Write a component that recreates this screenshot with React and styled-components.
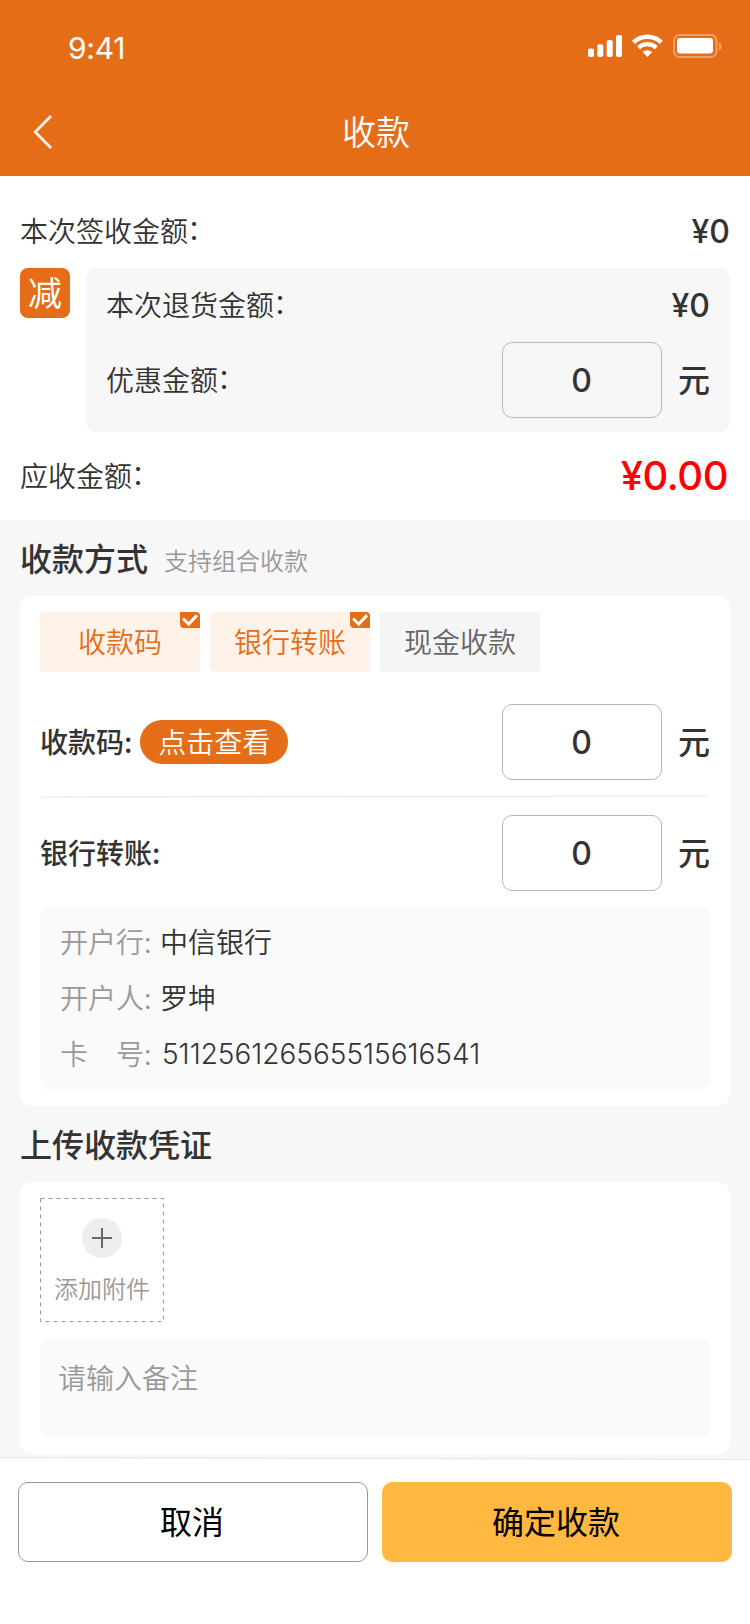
import React, { useState } from 'react';
import styled, { createGlobalStyle } from 'styled-components';

const GlobalStyle = createGlobalStyle`
  * {
    box-sizing: border-box;
  }

  body {
    margin: 0;
    background-color: #f7f7f7;
    color: #333;
    font-family: 'Noto Sans CJK SC', sans-serif;
    font-size: 28px;
  }

  button,
  input,
  textarea {
    margin: 0;
    padding: 0;
    border: 0;
    outline: 0;
    color: inherit;
    font-family: inherit;
  }
`;

const Page = styled.div`
  display: flex;
  flex-direction: column;
  width: 750px;
  height: 1624px;
  overflow: hidden;
`;

const Header = styled.header`
  flex-shrink: 0;
  height: 176px;
  background-color: #e66d17;
  color: #fff;
`;

const StatusBar = styled.div`
  display: flex;
  justify-content: space-between;
  height: 88px;
  padding: 0 28px 0 68px;
`;

const Clock = styled.span`
  padding-top: 30px;
  font-family: Inter, sans-serif;
  font-size: 30px;
  font-weight: 380;
  line-height: 36px;
  letter-spacing: -0.3px;
`;

const NavBar = styled.div`
  display: grid;
  grid-template-columns: 100px 1fr 98px;
  align-items: center;
  height: 88px;
`;

const Back = styled.button`
  display: flex;
  padding-left: 33px;
  background: none;
`;

const NavTitle = styled.h1`
  margin: 0;
  padding-bottom: 2px;
  font-size: 34px;
  font-weight: 350;
  line-height: 50px;
  text-align: center;
`;

const Summary = styled.section`
  flex-shrink: 0;
  height: 344px;
  padding: 18px 20px 0;
  background-color: #fff;
`;

const Row = styled.div`
  display: flex;
  align-items: center;
  justify-content: space-between;
  height: ${props => props.$height || 76}px;
`;

const Label = styled.span`
  padding-bottom: 2px;
  font-weight: ${props => (props.$strong ? 500 : 350)};
  line-height: 40px;
`;

const Colon = styled.span`
  margin-left: -1px;
  line-height: 1;
  vertical-align: 2px;
`;

const Amount = styled.span`
  padding-top: 2px;
  font-family: Inter, 'Noto Sans CJK SC', sans-serif;
  font-size: 32px;
  font-weight: 500;
  line-height: 38px;
`;

const Total = styled(Amount)`
  padding: 0 2px 1px 0;
  color: #ff0000;
  font-size: 40px;
  line-height: 48px;
  letter-spacing: -0.5px;
`;

const Deduction = styled.div`
  display: flex;
  align-items: flex-start;
  gap: 16px;
`;

const Minus = styled.span`
  width: 50px;
  height: 50px;
  border-radius: 8px;
  background-color: #e66d17;
  color: #fff;
  font-size: 34px;
  line-height: 47px;
  text-align: center;
`;

const DeductionPanel = styled.div`
  flex: 1;
  height: 164px;
  padding: 0 20px;
  border-radius: 10px;
  background-color: #f7f7f7;
`;

const MoneyField = styled.label`
  display: flex;
  align-items: center;
  gap: 16px;
  font-size: 32px;
  line-height: 46px;
`;

const Unit = styled.span`
  padding-bottom: 4px;
  font-weight: 500;
`;

const MoneyInput = styled.input`
  width: 160px;
  height: 76px;
  padding: 1px 1px 0 0;
  border: 1px solid #b8b8b8;
  border-radius: 10px;
  background: none;
  font-family: Inter, sans-serif;
  font-size: 32px;
  font-weight: 500;
  text-align: center;
`;

const SectionTitle = styled.h2`
  display: flex;
  align-items: center;
  flex-shrink: 0;
  gap: 16px;
  height: 76px;
  margin: 0;
  padding: 0 20px 3px;
  font-size: 32px;
  font-weight: 500;
  line-height: 46px;

  small {
    padding-top: 6px;
    color: #999;
    font-size: 24px;
    font-weight: 350;
    line-height: 36px;
  }
`;

const Card = styled.section`
  flex-shrink: 0;
  margin: 0 20px;
  padding: 16px 20px;
  border-radius: 12px;
  background-color: #fff;
`;

const Methods = styled.div`
  display: flex;
  gap: 10px;
  margin-bottom: 32px;
`;

const Method = styled.button`
  position: relative;
  width: 160px;
  height: 60px;
  padding-bottom: 2px;
  border-radius: 4px;
  background-color: ${props => (props.$active ? '#fff2e9' : '#f5f5f5')};
  color: ${props => (props.$active ? '#e66d17' : '#666')};
  font-size: 28px;
  font-weight: 350;
  line-height: 58px;

  svg {
    position: absolute;
    top: 0;
    right: 0;
  }
`;

const LabelGroup = styled.div`
  display: flex;
  align-items: center;
  gap: 8px;
`;

const ViewButton = styled.button`
  width: 148px;
  height: 44px;
  padding-bottom: 2px;
  border-radius: 22px;
  background-color: #e66d17;
  color: #fff;
  font-size: 28px;
  font-weight: 350;
  line-height: 42px;
`;

const Divider = styled.svg`
  display: block;
  margin: 15px 0 17px 1px;
`;

const BankInfo = styled.dl`
  display: grid;
  grid-template-columns: 100px 1fr;
  grid-auto-rows: 56px;
  align-items: center;
  height: 184px;
  margin: 15px 0 0;
  padding: 7px 20px;
  border-radius: 10px;
  background-color: #fafafa;
  line-height: 40px;
`;

const BankTerm = styled.dt`
  color: #999;
  font-weight: 350;
`;

const BankValue = styled.dd`
  margin: 0;
  font-weight: 350;
`;

const CardNumber = styled(BankValue)`
  padding: 2px 0 0 2px;
  font-family: Inter, sans-serif;
`;

const Upload = styled.button`
  position: relative;
  display: flex;
  flex-direction: column;
  align-items: center;
  width: 124px;
  height: 124px;
  padding-top: 20px;
  background: none;
  color: #999;
  font-size: 24px;
  font-weight: 350;
  line-height: 36px;
`;

const UploadOutline = styled.svg`
  position: absolute;
  inset: 0;
`;

const UploadIcon = styled.svg`
  margin-bottom: 12px;
`;

const Remark = styled.textarea`
  display: block;
  width: 100%;
  height: 100px;
  margin-top: 16px;
  padding: 19px 18px;
  border-radius: 10px;
  background-color: #fafafa;
  font-size: 28px;
  font-weight: 350;
  line-height: 40px;
  resize: none;

  &::placeholder {
    color: #999;
  }
`;

const Footer = styled.footer`
  flex: 1;
  margin-top: 2px;
`;

const FooterEdge = styled.svg`
  display: block;
`;

const Actions = styled.div`
  display: flex;
  gap: 14px;
  height: 164px;
  padding: 22px 18px 0;
  background-color: #fff;
`;

const ActionButton = styled.button`
  width: 350px;
  height: 80px;
  padding: 0 2px 3px 0;
  border: ${props => (props.$primary ? '0' : '1px solid #999')};
  border-radius: 10px;
  background-color: ${props => (props.$primary ? '#ffb940' : '#fff')};
  color: #000;
  font-size: 32px;
  line-height: 75px;
`;

const StatusIconsWrap = styled.svg`
  margin-top: 34px;
`;

const StatusIcons = () => (
  <StatusIconsWrap width='134' height='24' viewBox='0 0 134 24' fill='#fff'>
    <rect x='0' y='14.5' width='6' height='8.5' rx='2' />
    <rect x='9.3' y='10.3' width='6' height='12.7' rx='2' />
    <rect x='18.7' y='6' width='6' height='17' rx='2' />
    <rect x='28' y='1' width='6' height='22' rx='2' />
    <g fill='none' stroke='#fff'>
      <path d='M45.5 8.3a20 20 0 0 1 27.8 0' strokeWidth='4.4' />
      <path d='M50.5 13.7a13 13 0 0 1 17.8 0' strokeWidth='4.2' />
    </g>
    <path d='M54.6 18.1a7 7 0 0 1 9.5 0L59.4 22.9Z' />
    <rect x='86' y='1' width='42.5' height='22' rx='5.5' fill='none' stroke='#fff' strokeOpacity='0.35' strokeWidth='2' />
    <rect x='89' y='4' width='36' height='15.5' rx='3' />
    <path d='M131 8a4.6 4.6 0 0 1 0 8.4Z' fillOpacity='0.4' />
  </StatusIconsWrap>
);

const CheckMark = () => (
  <svg width='20' height='16' viewBox='0 0 20 16'>
    <path d='M0 0H16A4 4 0 0 1 20 4V16H4A4 4 0 0 1 0 12Z' fill='#e66d17' />
    <path d='M3 6.5L8.7 12L17 3.2' fill='none' stroke='#fff' strokeWidth='3' />
  </svg>
);

const AmountLabel = ({ children }) => (
  <Label>
    {children}
    <Colon>：</Colon>
  </Label>
);

const Money = ({ name }) => (
  <MoneyField>
    <MoneyInput name={name} defaultValue='0' />
    <Unit>元</Unit>
  </MoneyField>
);

const methods = ['收款码', '银行转账', '现金收款'];

const App = () => {
  const [selected, setSelected] = useState(['收款码', '银行转账']);

  const toggle = method =>
    setSelected(
      selected.includes(method)
        ? selected.filter(item => item !== method)
        : [...selected, method]
    );

  return (
    <Page>
      <GlobalStyle />
      <Header>
        <StatusBar>
          <Clock>9:41</Clock>
          <StatusIcons />
        </StatusBar>
        <NavBar>
          <Back>
            <svg width='20' height='34' viewBox='0 0 20 34' fill='none' stroke='#fff' strokeOpacity='0.9' strokeWidth='2.8'>
              <path d='M18 1L2.2 17L18 33' />
            </svg>
          </Back>
          <NavTitle>收款</NavTitle>
        </NavBar>
      </Header>

      <Summary>
        <Row $height={74}>
          <AmountLabel>本次签收金额</AmountLabel>
          <Amount>¥0</Amount>
        </Row>
        <Deduction>
          <Minus>减</Minus>
          <DeductionPanel>
            <Row $height={74}>
              <AmountLabel>本次退货金额</AmountLabel>
              <Amount>¥0</Amount>
            </Row>
            <Row>
              <AmountLabel>优惠金额</AmountLabel>
              <Money name='discount' />
            </Row>
          </DeductionPanel>
        </Deduction>
        <Row $height={88}>
          <AmountLabel>应收金额</AmountLabel>
          <Total>¥0.00</Total>
        </Row>
      </Summary>

      <SectionTitle>
        收款方式
        <small>支持组合收款</small>
      </SectionTitle>
      <Card>
        <Methods>
          {methods.map(method => (
            <Method
              key={method}
              $active={selected.includes(method)}
              onClick={() => toggle(method)}
            >
              {method}
              {selected.includes(method) && <CheckMark />}
            </Method>
          ))}
        </Methods>
        <Row>
          <LabelGroup>
            <Label $strong>收款码:</Label>
            <ViewButton>点击查看</ViewButton>
          </LabelGroup>
          <Money name='qrcode' />
        </Row>
        <Divider width='667' height='3' viewBox='0 0 667 3'>
          <path d='M0 2L667 1' stroke='#e6e6e6' />
        </Divider>
        <Row>
          <Label $strong>银行转账:</Label>
          <Money name='transfer' />
        </Row>
        <BankInfo>
          <BankTerm>开户行:</BankTerm>
          <BankValue>中信银行</BankValue>
          <BankTerm>开户人:</BankTerm>
          <BankValue>罗坤</BankValue>
          <BankTerm>卡　号:</BankTerm>
          <CardNumber>511256126565515616541</CardNumber>
        </BankInfo>
      </Card>

      <SectionTitle>上传收款凭证</SectionTitle>
      <Card>
        <Upload>
          <UploadOutline width='124' height='124' viewBox='0 0 124 124'>
            <rect x='0.5' y='0.5' width='123' height='123' fill='none' stroke='#999' strokeDasharray='4 4' />
          </UploadOutline>
          <UploadIcon width='40' height='40' viewBox='0 0 40 40'>
            <circle cx='20' cy='20' r='20' fill='#eee' />
            <path d='M20 10V30M10 20H30' stroke='#666' strokeWidth='2' />
          </UploadIcon>
          添加附件
        </Upload>
        <Remark placeholder='请输入备注' />
      </Card>

      <Footer>
        <FooterEdge width='750' height='4' viewBox='0 0 750 4'>
          <path d='M0 2L750 4H0Z' fill='#fff' />
          <path d='M0 1.5L750 3.5' stroke='#e6e6e6' />
        </FooterEdge>
        <Actions>
          <ActionButton>取消</ActionButton>
          <ActionButton $primary>确定收款</ActionButton>
        </Actions>
      </Footer>
    </Page>
  );
};

export default App;
